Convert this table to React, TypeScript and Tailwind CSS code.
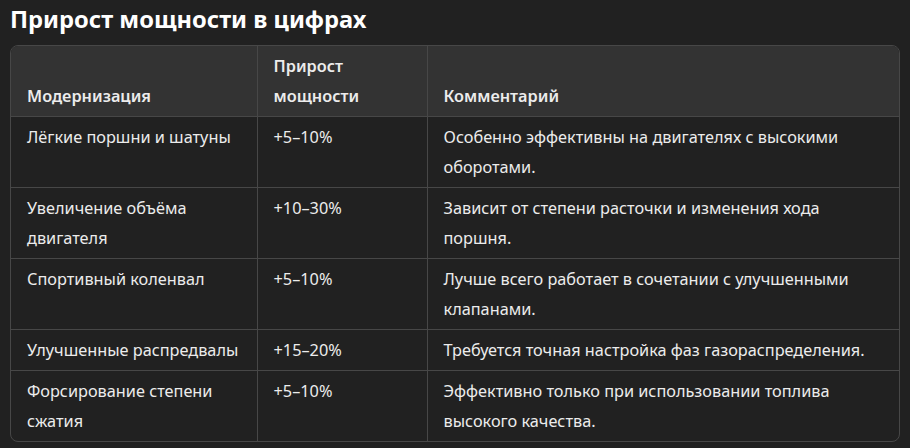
import React from "react";

const rows = [
  {
    name: "Лёгкие поршни и шатуны",
    gain: "+5–10%",
    note: "Особенно эффективны на двигателях с высокими оборотами.",
  },
  {
    name: "Увеличение объёма двигателя",
    gain: "+10–30%",
    note: "Зависит от степени расточки и изменения хода поршня.",
  },
  {
    name: "Спортивный коленвал",
    gain: "+5–10%",
    note: "Лучше всего работает в сочетании с улучшенными клапанами.",
  },
  {
    name: "Улучшенные распредвалы",
    gain: "+15–20%",
    note: "Требуется точная настройка фаз газораспределения.",
  },
  {
    name: "Форсирование степени сжатия",
    gain: "+5–10%",
    note: "Эффективно только при использовании топлива высокого качества.",
  },
];

export default function App() {
  return (
    <div
      className="min-h-screen w-[910px] h-[448px] bg-[#212121] text-[#ececec] px-[10px] pt-[2px]"
      style={{ fontFamily: '"Noto Sans", "Open Sans", sans-serif' }}
    >
      <h3 className="text-[23.7px] font-bold leading-[34px] text-white">
        Прирост мощности в цифрах
      </h3>
      <div className="mt-[9px] w-[890px] rounded-lg border border-[#474747] overflow-hidden">
        <table className="w-full table-fixed border-collapse text-[16.3px] leading-[30px]">
          <colgroup>
            <col className="w-[246px]" />
            <col className="w-[170px]" />
            <col />
          </colgroup>
          <thead className="bg-[#333333]">
            <tr>
              <th className="align-bottom text-left font-semibold px-4 py-[5px] border-r border-b border-[#474747]">
                Модернизация
              </th>
              <th className="align-bottom text-left font-semibold px-4 py-[5px] border-r border-b border-[#474747]">
                Прирост мощности
              </th>
              <th className="align-bottom text-left font-semibold px-4 py-[5px] border-b border-[#474747]">
                Комментарий
              </th>
            </tr>
          </thead>
          <tbody>
            {rows.map((r, i) => {
              const last = i === rows.length - 1;
              const bb = last ? "" : " border-b";
              return (
                <tr key={i}>
                  <td className={"align-top px-4 py-[5px] border-r border-[#474747]" + bb}>
                    {r.name}
                  </td>
                  <td className={"align-top px-4 py-[5px] border-r border-[#474747]" + bb}>
                    {r.gain}
                  </td>
                  <td className={"align-top px-4 py-[5px] border-[#474747]" + bb}>
                    {r.note}
                  </td>
                </tr>
              );
            })}
          </tbody>
        </table>
      </div>
    </div>
  );
}
